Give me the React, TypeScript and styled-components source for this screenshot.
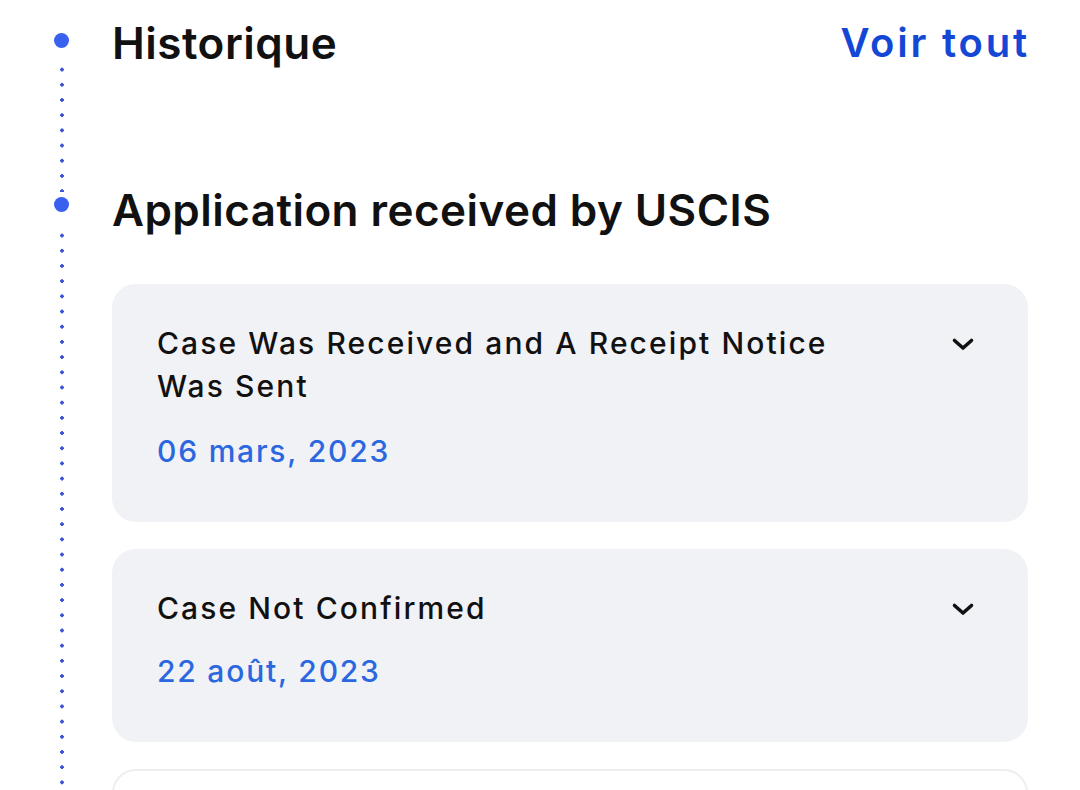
import React from "react";
import styled, { createGlobalStyle } from "styled-components";

const Global = createGlobalStyle`
  html, body { margin: 0; padding: 0; background: #ffffff; }
  body { font-family: Inter, "Noto Sans", sans-serif; color: #111; overflow: hidden; }
`;

const Page = styled.div`
  width: 1080px;
  height: 790px;
  overflow: hidden;
  display: grid;
  grid-template-columns: 112px 1fr;
  padding-right: 52px;
  box-sizing: border-box;
`;

const Rail = styled.div`
  position: relative;
  width: 112px;
`;

const BigDot = styled.div<{ $top: number }>`
  position: absolute;
  left: 54px;
  top: ${(p) => p.$top}px;
  width: 15px;
  height: 15px;
  border-radius: 50%;
  background: #3a60ef;
`;

const DotLine = styled.div<{ $top: number; $height: number }>`
  position: absolute;
  left: 60px;
  top: ${(p) => p.$top}px;
  width: 4px;
  height: ${(p) => p.$height}px;
  background-image: radial-gradient(circle, #3b55d6 1.6px, transparent 1.9px);
  background-size: 4px 15.2px;
  background-repeat: repeat-y;
`;

const Content = styled.div`
  display: flex;
  flex-direction: column;
`;

const Header = styled.div`
  display: flex;
  justify-content: space-between;
  align-items: center;
  height: 86px;
`;

const Title = styled.h1`
  margin: 0;
  font-size: 44px;
  line-height: 53px;
  font-weight: 600;
  letter-spacing: 0.5px;
  color: #111;
`;

const Link = styled.a`
  font-size: 40px;
  line-height: 48px;
  font-weight: 600;
  color: #1447d6;
  letter-spacing: 2.8px;
  margin-right: -2px;
  text-decoration: none;
`;

const Section = styled.h2`
  margin: 98px 0 0;
  font-size: 44px;
  line-height: 53px;
  font-weight: 600;
  letter-spacing: 0.45px;
  color: #111;
`;

const Cards = styled.div`
  margin-top: 47px;
  display: flex;
  flex-direction: column;
  gap: 27px;
`;

const Card = styled.div<{ $outlined?: boolean }>`
  display: grid;
  grid-template-columns: 1fr 24px;
  column-gap: 20px;
  padding: 38px 53px 53px 45px;
  border-radius: 24px;
  background: ${(p) => (p.$outlined ? "#ffffff" : "#f1f2f6")};
  border: ${(p) => (p.$outlined ? "2px solid #eeeef1" : "none")};
  min-height: ${(p) => (p.$outlined ? "120px" : "auto")};
`;

const CardTitle = styled.div`
  font-size: 30px;
  font-weight: 500;
  line-height: 43px;
  letter-spacing: 2.1px;
  color: #111;
  max-width: 700px;
`;

const CardDate = styled.div<{ $gap: number }>`
  margin-top: ${(p) => p.$gap}px;
  font-size: 30px;
  line-height: 36px;
  font-weight: 500;
  letter-spacing: 1.8px;
  color: #2b67df;
`;

const Chevron = styled.svg`
  width: 24px;
  height: 24px;
  margin-top: 10px;
`;

const ChevronIcon = () => (
  <Chevron viewBox="0 0 24 24" fill="none" stroke="#111" strokeWidth="3.6" strokeLinecap="round" strokeLinejoin="round">
    <path d="M3.5 8.5l8.5 7.5 8.5-7.5" />
  </Chevron>
);

const items = [
  { title: "Case Was Received and A Receipt Notice Was Sent", date: "06 mars, 2023", gap: 25 },
  { title: "Case Not Confirmed", date: "22 août, 2023", gap: 23 },
];

export default function App() {
  return (
    <Page>
      <Global />
      <Rail>
        <BigDot $top={33} />
        <DotLine $top={62} $height={130} />
        <BigDot $top={197} />
        <DotLine $top={228} $height={580} />
      </Rail>
      <Content>
        <Header>
          <Title>Historique</Title>
          <Link href="#">Voir tout</Link>
        </Header>
        <Section>Application received by USCIS</Section>
        <Cards>
          {items.map((it) => (
            <Card key={it.date}>
              <div>
                <CardTitle>{it.title}</CardTitle>
                <CardDate $gap={it.gap}>{it.date}</CardDate>
              </div>
              <ChevronIcon />
            </Card>
          ))}
          <Card $outlined>
            <div />
          </Card>
        </Cards>
      </Content>
    </Page>
  );
}
